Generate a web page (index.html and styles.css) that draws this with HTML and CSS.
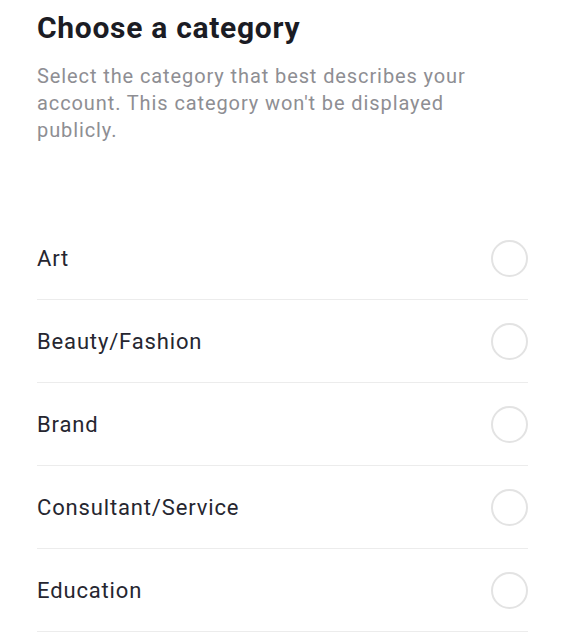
FILE: index.html
```html
<!DOCTYPE html>
<html>
<head>
<meta charset="utf-8">
<link rel="stylesheet" href="styles.css">
</head>
<body>
<div class="page">
  <h1 class="title">Choose a category</h1>
  <p class="subtitle">Select the category that best describes your account. This category won't be displayed publicly.</p>
  <ul class="list">
    <li class="row"><span class="label">Art</span><span class="radio"></span></li>
    <li class="row"><span class="label">Beauty/Fashion</span><span class="radio"></span></li>
    <li class="row"><span class="label">Brand</span><span class="radio"></span></li>
    <li class="row"><span class="label">Consultant/Service</span><span class="radio"></span></li>
    <li class="row"><span class="label">Education</span><span class="radio"></span></li>
  </ul>
</div>
</body>
</html>
```
FILE: styles.css
```css
html, body {
  margin: 0;
  padding: 0;
  background: #ffffff;
}
body {
  font-family: Roboto, "Liberation Sans", sans-serif;
}
.page {
  padding: 10px 38px 0 37px;
}
.title {
  margin: 0;
  font-size: 30px;
  line-height: 36px;
  font-weight: 700;
  letter-spacing: 0.7px;
  color: #1b1c24;
}
.subtitle {
  margin: 17px 0 0 0;
  font-size: 20px;
  line-height: 27px;
  letter-spacing: 0.9px;
  color: #8e8e93;
}
.list {
  list-style: none;
  margin: 73px 0 0 0;
  padding: 0;
}
.row {
  display: flex;
  align-items: center;
  justify-content: space-between;
  height: 82px;
  border-bottom: 1px solid #ececec;
}
.label {
  font-size: 22px;
  letter-spacing: 0.85px;
  color: #262630;
}
.radio {
  width: 33px;
  height: 33px;
  border: 2px solid #e3e3e3;
  border-radius: 50%;
}
```
